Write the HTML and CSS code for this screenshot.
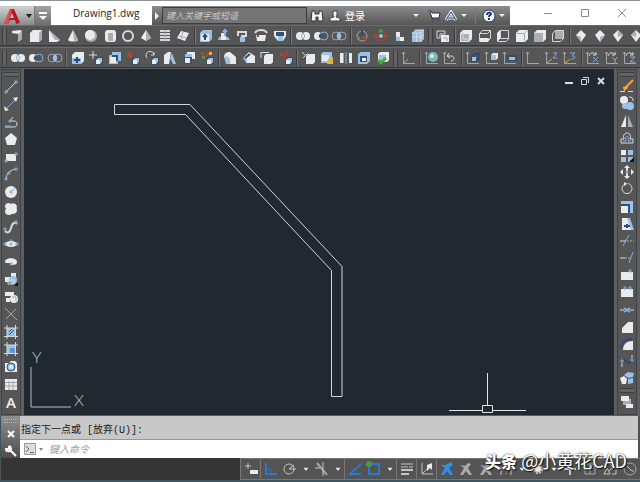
FILE: index.html
```html
<!DOCTYPE html>
<html lang="zh-CN">
<head>
  <meta charset="UTF-8" />
  <meta name="viewport" content="width=device-width, initial-scale=1.0" />
  <title>Drawing1.dwg</title>
  <link rel="stylesheet" href="styles.css">
</head>
<body>

  <header class="titlebar">
    <button class="app-btn" aria-label="Application menu">
      <svg width="18" height="18" viewBox="0 0 18 18"><path fill="#b3181d" d="M1 17L7 2h4l6 14-4 1-1-4H7l-2 4z"/><path fill="#e2504c" d="M1 17L7 2l2 1-4 14z"/><path fill="#c5c5c5" d="M9 6l2 5H7z"/></svg>
      <svg width="6" height="4" viewBox="0 0 6 4"><path fill="#222" d="M0 0h6L3 4z"/></svg>
    </button>
    <button class="quick-btn" aria-label="Quick access">
      <svg width="8" height="8" viewBox="0 0 8 8"><path fill="#fff" d="M0 0h8v2H0zM0 4h8L4 8z"/></svg>
    </button>
    <h1 class="doc-title">Drawing1.dwg</h1>
    <div class="infocenter">
      <button class="expand" aria-label="Expand">
        <svg width="5" height="8" viewBox="0 0 5 8"><path fill="#eee" d="M0 0l4 4-4 4z"/></svg>
      </button>
      <input class="search" type="text" placeholder="键入关键字或短语" aria-label="搜索">
      <button class="info-btn" aria-label="Search">
        <svg width="14" height="14" viewBox="0 0 14 14"><path fill="#f2f2f2" stroke="#333" d="M2 2h3v3h4V2h3l1 10H8V8H6v4H1z"/></svg>
      </button>
      <button class="info-btn login">
        <svg width="12" height="12" viewBox="0 0 12 12"><path fill="#f4f4f4" stroke="#444" d="M4 1h4v4L7 7l4 1v3H1V8l4-1-1-2z"/></svg>
        登录
      </button>
      <span class="caret push"></span>
      <button class="info-btn" aria-label="App store">
        <svg width="14" height="12" viewBox="0 0 14 12"><path fill="#fff" stroke="#1e2c50" d="M1 1h3l1 2h8l-1 5H5L3 2"/><circle cx="6" cy="10" r="1" fill="#fff" stroke="#1e2c50"/><circle cx="11" cy="10" r="1" fill="#fff" stroke="#1e2c50"/></svg>
      </button>
      <button class="info-btn" aria-label="A360">
        <svg width="14" height="12" viewBox="0 0 14 12"><path fill="none" stroke="#e7effa" stroke-width="3" d="M2 10l5-8 5 8M3 8h8"/><path fill="none" stroke="#29406b" d="M2 10l5-8 5 8M3 8h8"/></svg>
      </button>
      <span class="caret"></span>
      <span class="info-sep"></span>
      <button class="info-btn" aria-label="Help">
        <svg width="14" height="14" viewBox="0 0 14 14"><circle cx="7" cy="7" r="6" fill="#fff" stroke="#1f3a78"/><path fill="none" stroke="#1f3a78" stroke-width="2" d="M5 6c0-3 4-3 4-1 0 1-2 1-2 3M7 9v2"/></svg>
      </button>
      <span class="caret"></span>
    </div>
    <div class="window-btns">
      <button aria-label="Minimize"><svg width="10" height="10" viewBox="0 0 10 10"><path d="M1 5.5h8"/></svg></button>
      <button aria-label="Maximize"><svg width="10" height="10" viewBox="0 0 10 10"><path d="M1.500 1.500h7v7h-7z"/></svg></button>
      <button aria-label="Close"><svg width="10" height="10" viewBox="0 0 10 10"><path d="M1 1l8 8M9 1L1 9"/></svg></button>
    </div>
  </header>

  <!-- toolbars are filled from script.js -->
  <div class="toolbar row overflow" id="modeling"></div>
  <div class="toolbar row" id="editing"></div>

  <main class="workspace">
    <div class="toolbar column" id="draw"></div>
    <section class="canvas">
      <svg class="drawing" width="100%" height="100%">
        <path class="pline" d="M90.500 35.500H166L318 197.500V327.500H307.500V201.500L161.500 45.500H90.500z"/>
        <path class="cursor" d="M463.500 304V336M425 341.500H458M469 341.500H502M458.500 336.500h10v7h-10z"/>
      </svg>
      <svg class="ucs" width="64" height="76" viewBox="0 0 64 76">
        <path d="M7 28v40h40"/>
        <text x="8" y="24">Y</text>
        <text x="50" y="67">X</text>
      </svg>
      <div class="doc-btns">
        <button aria-label="Minimize drawing"><svg width="10" height="10" viewBox="0 0 10 10"><path d="M1 7h8"/></svg></button>
        <button aria-label="Restore drawing"><svg width="10" height="10" viewBox="0 0 10 10"><path class="thin" d="M1.500 3.500h5v5h-5zM3 1.500h5.500V7"/></svg></button>
        <button aria-label="Close drawing"><svg width="10" height="10" viewBox="0 0 10 10"><path d="M2 2l6 6M8 2L2 8"/></svg></button>
      </div>
    </section>
    <div class="toolbar column" id="modify"></div>
  </main>

  <section class="command">
    <div class="command-side">
      <span class="dots"></span>
      <button aria-label="Close command line"><svg width="10" height="10" viewBox="0 0 10 10"><path stroke="#fff" stroke-width="2" d="M2 2l6 6M8 2L2 8"/></svg></button>
      <button aria-label="Customize"><svg width="12" height="12" viewBox="0 0 12 12"><path fill="none" stroke="#fff" stroke-width="2" d="M5 5l6 6M4 1v3H1c0 3 5 3 5 0 0-1-1-3-2-3"/></svg></button>
    </div>
    <div class="history">指定下一点或 [放弃(U)]:</div>
    <div class="prompt">
      <svg width="20" height="12" viewBox="0 0 20 12"><path fill="#ddd" stroke="#999" d="M.5.5h11v11H.5z"/><path fill="none" stroke="#666" d="M2 3l3 3-3 3M6 9.500h4"/><path fill="#888" d="M15 5h4l-2 3z"/></svg>
      <input type="text" placeholder="键入命令" aria-label="命令">
    </div>
  </section>

  <footer class="statusbar" id="status"></footer>

  <div class="watermark"><b>头条</b> @小黄花CAD</div>

  <script src="script.js"></script>
</body>
</html>
```

FILE: styles.css
```css
* {
  box-sizing: border-box;
}

body {
  margin: 0;
  min-height: 100vh;
  display: flex;
  flex-direction: column;
  position: relative;
  overflow: hidden;
  font-family: "Open Sans", "Noto Sans CJK SC", sans-serif;
  font-size: 10px;
  background: #4b5357;
  border-bottom: 2px solid #40545e;
}

button {
  display: flex;
  align-items: center;
  justify-content: center;
  margin: 0;
  padding: 0;
  border: 0;
  background: none;
  font: inherit;
  color: inherit;
}

svg {
  display: block;
  flex: none;
}

input {
  font: inherit;
  min-width: 0;
}

/* Title bar */
.titlebar {
  display: flex;
  align-items: flex-end;
  height: 25px;
  background: #fff;
  border-top: 1px solid #8a9499;
}

.app-btn {
  width: 34px;
  height: 19px;
  gap: 5px;
  padding-left: 1px;
  background: linear-gradient(#d2d2d2, #8b8b8b);
}

.quick-btn {
  width: 17px;
  height: 19px;
  background: linear-gradient(#a2a2a2, #6e6e6e);
  border-left: 1px solid #777;
}

.doc-title {
  width: 101px;
  margin: 0;
  padding-left: 22px;
  font-size: 10px;
  font-weight: 400;
  line-height: 24px;
  color: #222;
}

.infocenter {
  flex: 1;
  display: flex;
  align-items: center;
  height: 19px;
  color: #fff;
  background: linear-gradient(#8c8c8c, #555);
}

.expand {
  width: 10px;
  height: 19px;
}

.search {
  width: 145px;
  height: 17px;
  padding: 0 3px;
  border: 1px solid #3e3e3e;
  background: #747474;
  font-size: 9px;
}

.search::placeholder {
  color: #c9c9c9;
  font-style: italic;
}

.info-btn {
  height: 19px;
  margin-left: 3px;
}

.login {
  gap: 4px;
  margin-left: 5px;
}

.caret {
  width: 0;
  margin: 0 5px 0 3px;
  border: 3px solid transparent;
  border-top-color: #eee;
  border-bottom: 0;
}

.push {
  margin-left: auto;
}

.info-sep {
  width: 1px;
  height: 16px;
  margin: 0 3px;
  background: #7a7a7a;
}

.window-btns {
  display: flex;
  align-self: stretch;
  width: 130px;
  padding-left: 20px;
}

.window-btns button {
  width: 37px;
}

.window-btns path {
  fill: none;
  stroke: #888;
}

/* Toolbars */
.toolbar {
  display: flex;
  align-items: center;
  justify-content: space-between;
  background: #565656;
}

.row {
  height: 21px;
  padding: 0 2px;
  border-top: 1px solid #6b6b6b;
  border-bottom: 1px solid #373737;
}

.row + .row {
  margin-top: 1px;
}

.overflow {
  margin-right: -5px;
  padding-right: 0;
}

.column {
  flex-direction: column;
  width: 20px;
  padding: 2px 0 4px;
  border: 1px solid #3c4245;
}

.sep {
  width: 2px;
  height: 16px;
  border-left: 1px solid #3a3a3a;
  border-right: 1px solid #777;
}

.grip {
  width: 5px;
  height: 16px;
  border: 1px solid #3d3d3d;
  border-width: 0 1px;
  background: #626262;
}

.column .grip {
  width: 14px;
  height: 5px;
  border-width: 1px 0;
}

.text-tool {
  height: 16px;
  font-size: 15px;
  font-weight: 600;
  line-height: 16px;
  color: #eee;
}

.w {
  fill: #e9ebed;
}

.g {
  fill: #a8aeb4;
}

.b {
  fill: #9ac1e6;
}

.d {
  fill: #36506c;
}

.r {
  fill: #b9412f;
}

.y {
  fill: #e8b03c;
}

.n {
  fill: #4e9a45;
}

.lw,
.lg,
.lb,
.ld,
.lr,
.ly {
  fill: none;
  stroke: #d6d9dc;
}

.lg {
  stroke: #a0a6aa;
}

.lb {
  stroke: #83aee0;
}

.ld {
  stroke: #2a4a7c;
}

.lr {
  stroke: #b9412f;
}

.ly {
  stroke: #e8a838;
}

.thick {
  stroke-width: 2;
}

/* Drawing area */
.workspace {
  flex: 1;
  display: flex;
  gap: 3px;
  padding: 1px 3px 1px 1px;
  background: #5b5f61;
}

.canvas {
  position: relative;
  flex: 1;
  overflow: hidden;
  background: #212830;
}

.drawing {
  position: absolute;
  top: 0;
  left: 0;
}

.pline {
  fill: none;
  stroke: #d3d6d8;
}

.cursor {
  fill: none;
  stroke: #e2e4e6;
}

.ucs {
  position: absolute;
  left: 0;
  bottom: 0;
}

.ucs path {
  fill: none;
  stroke: #b9bdc0;
}

.ucs text {
  fill: #c5c9cc;
  font: 300 16px Lato, sans-serif;
}

.doc-btns {
  position: absolute;
  top: 7px;
  right: 8px;
  display: flex;
  gap: 6px;
}

.doc-btns path {
  fill: none;
  stroke: #d9dcde;
  stroke-width: 2;
}

.doc-btns .thin {
  stroke-width: 1;
}

/* Command line */
.command {
  display: grid;
  grid-template-columns: 19px 1fr;
  grid-template-rows: 24px 18px;
  margin-right: 2px;
  border-left: 1px solid #40545e;
}

.command-side {
  grid-row: 1 / 3;
  display: flex;
  flex-direction: column;
  align-items: center;
  justify-content: space-between;
  padding: 3px 0 1px;
  background: linear-gradient(#8e8e8e, #4c4c4c);
}

.dots {
  width: 14px;
  height: 4px;
  border: 1px dotted #b5b5b5;
  border-width: 1px 0;
}

.history {
  padding: 5px 1px 0;
  font-family: "Liberation Mono", "Noto Sans CJK SC", monospace;
  line-height: 20px;
  color: #1c1c1c;
  background: #c8c8c8;
  border-bottom: 1px solid #999;
}

.prompt {
  display: flex;
  align-items: center;
  gap: 5px;
  padding-left: 4px;
  background: #fff;
}

.prompt input {
  flex: 1;
  height: 16px;
  padding: 0;
  border: 0;
}

.prompt input::placeholder {
  color: #999;
  font-style: italic;
}

/* Status bar */
.statusbar {
  display: flex;
  justify-content: flex-end;
  height: 22px;
  margin-left: 1px;
  background: #353535;
}

.statusbar button {
  width: 20px;
  background: #545454;
  border-top: 1px solid #777;
  border-bottom: 1px solid #777;
}

.statusbar .drop {
  width: 12px;
}

.statusbar .edge {
  border-left: 1px solid #777;
}

.statusbar .lb {
  stroke: #2f78cc;
}

.statusbar .b {
  fill: #2f8ff0;
}

.statusbar .lw {
  stroke: #c4c4c4;
}

.watermark {
  position: absolute;
  right: 13px;
  bottom: 7px;
  font-size: 18px;
  line-height: 24px;
  font-family: "Noto Sans CJK SC", sans-serif;
  color: #fff;
  text-shadow: 1px 1px 1px #111, 0 0 2px #222;
  white-space: nowrap;
}

.watermark b {
  font-size: 16px;
  font-weight: 900;
}
```

FILE: script.js
```js
// pieces shared by several icons
const axes = '<path class="lg" d="M2.500 2v11.500H14M1 4l1.500-2L4 4"/>';
const cube = '<path class="w" d="M2 5l3-3h9v9l-3 3H2z"/>';
const smallCube = '<path class="d" d="M7 7h8v8H7z"/><path class="w" d="M8 10h4v4H8z"/><path class="b" d="M8 10l2-2h4v4l-2 2v-4z"/>';
const diamond = '<path class="w" d="M8 2l5 5-5 7-5-7z"/>';

// 16x16 icons
const icons = {
  polysolid: '<path class="w" d="M3 3l8-1 2 1v8l-4 3V6L3 5z"/><path class="g" d="M9 6l4-3v8l-4 3z"/>',
  box: cube + '<path class="g" d="M11 5l3-3v9l-3 3z"/>',
  wedge: '<path class="w" d="M3 2l11 10-3 2H3z"/><path class="g" d="M3 2l11 10H9z"/>',
  cone: '<path class="w" d="M8 2l5 10c-1 2-9 2-10 0z"/><path class="g" d="M8 2l5 10-4 1z"/>',
  sphere: '<circle class="g" cx="8" cy="8" r="6"/><circle class="w" cx="7" cy="7" r="5"/>',
  cylinder: '<rect class="w" x="3" y="2" width="11" height="12" rx="3"/><path class="g" d="M6 5h5v8H6z"/>',
  torus: '<circle class="lw thick" cx="8" cy="8" r="5"/>',
  pyramid: '<path class="w" d="M8 2l5 8-5 3-5-3z"/><path class="g" d="M8 2l5 8-5 3z"/>',
  helix: '<path class="lw thick" d="M3 3h10M3 6h10M3 9h10M3 12h10"/><path class="lg" d="M8 2v12"/>',
  planar: '<path class="w" d="M6 3l8 2-4 8-8-3z"/><path class="lg" d="M4 8l7 2M8 4L6 11"/>',
  extrude: '<path class="b" d="M2 5l3-3h9v9l-3 3H2z"/><path class="w" d="M3 6h8v7H3z"/><path class="ld thick" d="M7 12V7M5 9l2-2 2 2"/>',
  presspull: '<path class="b" d="M3 9h9l2 3H2z"/><path class="w" d="M5 5h5v7H5z"/><path class="lb thick" d="M9 8V2M7 4l2-2 2 2"/>',
  sweep: '<path class="lw thick" d="M3 8V4h8v4H7v4"/><path class="b" d="M5 9h5v5H5z"/>',
  revolve: '<path class="lw thick" d="M2 5c2-4 10-4 12 0"/><path class="w" d="M3 7h10l-1 6H4z"/><path class="r" d="M4 7h2v2H4z"/>',
  loft: '<path class="w" d="M2 3h12v5l-3 5H6L2 8z"/><path class="d" d="M4 4h8v4H4z"/><path class="b" d="M6 8h5v5H6z"/>',
  union: '<circle class="w" cx="5" cy="8" r="4"/><circle class="w" cx="11" cy="8" r="4"/><path class="lb" d="M8 5c-2 2-2 4 0 6 2-2 2-4 0-6z"/>',
  subtract: '<circle class="lb" cx="11" cy="8" r="4"/><circle class="w" cx="5" cy="8" r="4"/><path class="d" d="M8 5c-3 2-3 4 0 6 2-2 2-4 0-6z"/>',
  intersect: '<circle class="lg" cx="5" cy="8" r="4"/><circle class="lg" cx="11" cy="8" r="4"/><path class="b" d="M8 4c-3 3-3 5 0 8 3-3 3-5 0-8z"/>',
  gizmo: '<circle class="lg" cx="8" cy="8" r="5"/><path class="lr thick" d="M8 8l5 4"/><path class="ld thick" d="M8 8V2"/><path class="n" d="M3 9h3v3H3z"/>',
  gizmo2: '<circle class="lr" cx="8" cy="8" r="5"/><path class="lr thick" d="M1 8h4M11 8h4"/><circle class="n" cx="8" cy="3" r="2"/><circle class="b" cx="8" cy="8" r="2"/>',
  stepBlock: '<path class="w" d="M5 4h4v5h4v4H5z"/><path class="b" d="M5 9h4v4H5z"/>',
  grid3d: '<path class="b" d="M2 5l3-3h9v9l-3 3H2z"/><path class="lw" d="M2 9h9l3-3M6.500 5v9M2 5h9l3-3M11 5v9M5 2h9"/>',
  views: '<path class="lw" d="M2 3h8v3H5v4H2z"/><path class="w" d="M6 7h8v7H6z"/><path class="lg" d="M8 10h4v3"/>',
  viewTop: cube + '<path class="g" d="M3 6h8v7H3z"/><path class="lw" d="M5 2v9h9"/>',
  viewBottom: '<path class="lw" d="M2.500 5.500l3-3h8v8l-3 3h-8zM2 5.500h8.500l3-3"/><path class="w" d="M3 10h8l2 1-2 3H3z"/>',
  viewLeft: '<path class="lw" d="M5.500 2.500h8v8h-8zM3 13.500h8l3-3"/><path class="w" d="M2 5l3-3v9l-3 3z"/>',
  viewRight: cube + '<path class="lg" d="M3 5.500h7.500V13M10.500 5.500l3-3"/>',
  viewFront: '<path class="w" d="M2 5l3-3h9v9l-3 3z"/><path class="g" d="M2 5h9v9H2z"/>',
  viewBack: '<path class="g" d="M5 2h9v9H5z"/><path class="lw" d="M2.500 5.500l3-3h8v8l-3 3h-8zV13"/>',
  iso1: diamond + '<path class="g" d="M3 7l5 2v5z"/>',
  iso2: diamond + '<path class="g" d="M8 9l5-2-5 7z"/>',
  iso3: diamond + '<path class="g" d="M8 2l5 5-5 2z"/>',
  iso4: diamond + '<path class="g" d="M8 2v7L3 7z"/>',

  extrudeFace: '<path class="w" d="M2 5l3-3h9v9l-3 3H2z"/><path class="b" d="M2 8h9v6H2z"/><path class="ld thick" d="M4 10h6M7 7v6"/>',
  moveFace: '<path class="lw" d="M5 1v8M1 5h8"/>' + smallCube,
  offsetFace: '<path class="b" d="M5 2h9v9h-3v3H2V5h3z"/><path class="d" d="M5 5h6v6H5z"/><path class="w" d="M3 7h6v6H3z"/>',
  deleteFace: '<path class="r" d="M2 2l3 1 3-1-1 3 1 3-3-1-3 1 1-3z"/>' + smallCube,
  rotateFace: '<path class="lw" d="M3 8a4 4 0 1 1 7-3M10 2v3H7"/>' + smallCube,
  taperFace: '<path class="w" d="M2 5l4-3h3l-2 12H2z"/><path class="b" d="M10 3l4 11h-3L8 8z"/>',
  copyFace: '<path class="w" d="M6 2h8v7H6z"/><path class="b" d="M4 4h7v6H4z"/><path class="d" d="M3 7h8v7H3z"/><path class="w" d="M4 8h5v5H4z"/>',
  colorFace: '<path class="r" d="M2 2h3v3H2z"/><path class="n" d="M3 6h3v3H3z"/><path class="lr thick" d="M6 7l5-5"/><path class="y" d="M10 2h3v3h-3z"/>' + smallCube,
  filletEdge: '<path class="w" d="M2 7c0-4 3-5 6-5l6 5v7H6z"/><path class="b" d="M2 7c4-2 7 2 6 7H4z"/>',
  chamferEdge: '<path class="w" d="M2 8l6-6 6 4v7H6z"/><path class="ld thick" d="M3 9l6-5"/><path class="b" d="M2 8l4 1v5z"/>',
  copyEdge: '<path class="lw" d="M2 2v6M2 2.500h8"/><path class="w" d="M5 6l2-2h7v8l-2 2H5z"/>',
  colorEdge: '<path class="r" d="M2 3h3v3H2zM6 6h2v3H6z"/><path class="lr thick" d="M6 6l4-4"/>' + smallCube,
  imprint: '<path class="lw" d="M1 2l6 6M2 8l5-5"/><path class="w" d="M5 6l2-2h7v8l-2 2H5z"/>',
  clean: '<path class="b" d="M2 4l2-2h9v9l-2 2H2z"/><path class="w" d="M3 5h7v6H3z"/><path class="y" d="M9 9h3V7h2v7H8z"/>',
  separate: '<path class="w" d="M2 3h3v10H2zM11 3h3v10h-3z"/><path class="lb" d="M8 2v12M5.500 3v10"/>',
  shell: '<path class="b" d="M2 4l3-2h9v9l-3 3H2z"/><path class="d" d="M4 6h7v6H4z"/><path class="w" d="M6 8h4v3H6z"/>',
  check: '<path class="w" d="M3 4l2-2h9v8l-2 2H3z"/><path class="b" d="M4 5h7v6H4z"/><path fill="none" stroke="#4aa83c" stroke-width="3" d="M3 10l3 3 5-5"/>',
  ucs: axes + '<path class="lg" d="M3 13l4-4"/>',
  world: axes + '<circle cx="9" cy="7" r="5" fill="#79b9bd"/><circle cx="8" cy="6" r="2" fill="#d8efe8"/>',
  ucsPrev: axes + '<path class="lw" d="M5 6h4c4 0 4 5 0 5M7 3L5 6l3 2"/>',
  ucsFace: axes + '<path class="ld thick" d="M7 7l3-3h4v4l-3 3H7z"/><path class="b" d="M7 7h4v4H7z"/>',
  ucsObject: axes + '<path class="w" d="M7 5l2-2h5v5l-2 2H7z"/><path class="b" d="M7 5h5v5H7z"/>',
  ucsView: axes + '<path class="d" d="M5 5h10v6H5z"/><path class="b" d="M7 7h6v3H7z"/>',
  origin: axes,
  zAxis: axes + '<path class="lb" d="M9 3h4l-4 5h4"/><path class="ly" d="M3 13l5-4"/>',
  threePoint: axes + '<path class="lb" d="M8 3h5L10 6c5 0 3 4-1 3"/><path class="ly" d="M3 13l5-4"/>',
  rotX: axes + '<path class="lw" d="M4 6c1-4 5-4 7-1M11 2v3H8"/><path class="lb" d="M8 7l5 5M13 7l-5 5"/>',
  rotY: axes + '<path class="lw" d="M4 6c1-4 5-4 7-1M11 2v3H8"/><path class="lb" d="M8 7l3 3 2-3M11 10v3"/>',
  rotZ: axes + '<path class="lw" d="M4 6c1-4 5-4 7-1M11 2v3H8"/><path class="lb" d="M8 7h5l-5 5h5"/>',

  line: '<path class="lw" d="M3 13L13 3"/><path class="lb" d="M2 12h2v2H2zM12 2h2v2h-2z"/>',
  xline: '<path class="lb" d="M4 12l8-8"/><path class="w" d="M1 10l5 4-4 1zM10 2l5-1-2 5z"/>',
  polyline: '<path class="lw" d="M2 13h9c4 0 4-6 0-6H7l3-4"/><path class="lb" d="M2 12h6M6 6h2v2H6z"/>',
  polygon: '<path class="w" d="M8 2l6 5-2 7H4L2 7z"/>',
  rectangle: '<path class="w" d="M3 5h10v7H3z"/><path class="lb" d="M2 11h2v2H2zM12 4h2v2h-2z"/>',
  arc: '<path class="lw" d="M3 13C3 8 7 4 13 3"/><path class="lb" d="M2 12h2v2H2zM5 6h2v2H5zM12 2h2v2h-2z"/>',
  circle: '<circle class="w" cx="8" cy="8" r="6"/><path class="lb" d="M7 7h2v2H7zM9 7l3-3"/>',
  cloud: '<path class="w" d="M3 3q3-2 5 0 4-2 6 2-1 2 0 4 0 4-5 4-3 2-6 0-2-3 0-5-2-3 0-5z"/>',
  spline: '<path class="lw thick" d="M2 12c3 3 5 1 6-3s3-7 6-4"/><path class="lb" d="M1 9h2v2H1zM12 2h2v2h-2z"/>',
  ellipse: '<ellipse class="w" cx="8" cy="8" rx="6" ry="3"/><path class="lb" d="M7 7h2v2H7zM1 7h2v2H1zM13 7h2v2h-2zM7 4h2v1"/>',
  ellipseArc: '<path class="w" d="M2 8c0-5 12-5 12 0 0 3-4 3-6 3V9H3z"/><path class="lb" d="M7 9h2v2H7z"/>',
  insert: '<path class="w" d="M2 6h5v5H2zM8 2h5v5H8z"/><circle class="b" cx="10" cy="9" r="4"/><path class="lw" d="M5 9h6v4H5z"/><path fill="#111" d="M15 11v4h-4z"/>',
  block: '<path class="w" d="M2 3h9v4H2zM3 9h4v4H3z"/><circle class="w" cx="11" cy="10" r="4"/><path class="lb" d="M9 8h4v4"/>',
  point: '<path class="lg" d="M2 2l12 12M13 3L3 13"/>',
  hatch: '<path class="b" d="M4 4h9v9H4z"/><path class="lw" d="M4 1v14M12.500 1v14M1 4h14M1 12.500h14"/><path class="ld" d="M6 8l3-3M6 11l5-5"/>',
  gradient: '<path class="b" d="M4 4h9v9H4z"/><path class="lw" d="M4 1v14M12.500 1v14M1 4h14M1 12.500h14"/><path fill="#5f93da" d="M7 7h5v5H7z"/>',
  region: '<path class="w" d="M2 4h4l2-2h4l2 2v9H2z"/><circle class="b" cx="8" cy="8" r="4"/><circle class="w" cx="8" cy="8" r="2"/><circle class="ld" cx="8" cy="8" r="4"/>',
  table: '<path class="w" d="M2 3h12v11H2z"/><path class="lg" d="M2 6.500h12M2 10h12M6 5v9M10 5v9"/>',

  erase: '<path class="ly thick" d="M7 9l7-7"/><path class="lr" d="M8 10l7-7"/><path class="y" d="M4 9l4-1 1 2-4 3z"/><path class="lw" d="M1 13.500h5M9 13.500h5"/>',
  copy: '<circle class="w" cx="5" cy="5" r="4"/><circle class="b" cx="11" cy="11" r="4"/><circle class="b" cx="6" cy="11" r="3"/><path class="lw" d="M10 2c3 0 4 1 4 4"/>',
  mirror: '<path class="w" d="M7 2v12H2z"/><path class="g" d="M9 2v12h5z"/>',
  offset: '<path class="lw" d="M2 13h12V9h-3c3-8-9-8-6 0H2z"/><path class="lb" d="M4 11h3C5 5 11 5 9 11h3"/>',
  array: '<path class="w" d="M2 3h5v5H2z"/><path class="b" d="M9 3h5v5H9zM2 10h5v5H2zM9 10h5v5H9z"/><path fill="#111" d="M15 10v5h-5z"/>',
  move: '<path class="w" d="M8 1l3 3H9v3H7V4H5zM8 15l3-3H9V9H7v3H5zM1 8l3-3v6zM15 8l-3-3v6z"/><path class="lb" d="M7 7h2v2H7z"/>',
  rotate: '<path class="lw" d="M10 3a5 5 0 1 1-4 0"/><path class="lb" d="M6 3c2-1 3-1 5 0"/><path class="w" d="M5 1l3 2-3 2z"/>',
  scale: '<path class="b" d="M2 2h12v12H2z"/><path class="d" d="M2 5h9v9H2z"/><path class="w" d="M2 7h7v7H2z"/>',
  stretch: '<path class="w" d="M3 2h7l4 12H3z"/><path class="b" d="M8 2h3l4 12h-3z"/><path class="ld thick" d="M5 10h6M8 8v4"/>',
  trim: '<path class="lb" d="M4 13l6-11"/><path class="lw" d="M1 8h6"/><path class="lg" stroke-dasharray="2 1" d="M8 8h7"/>',
  extend: '<path class="lb" d="M10 13l4-11"/><path class="lw" d="M1 8h5"/><path class="lg" stroke-dasharray="2 1" d="M6 8h6"/>',
  breakAt: '<path class="w" d="M2 5h12v8H2z"/><path class="lb" d="M10 3h2v2h-2z"/>',
  breakTwo: '<path class="w" d="M2 5h12v8H2z"/><path class="lb" d="M5 3h2v2H5zM10 3h2v2h-2z"/>',
  join: '<path class="lw" d="M1 8h4M11 8h4"/><path class="lb thick" d="M5 6l3 2-3 2M11 6L8 8l3 2"/>',
  chamfer: '<path class="w" d="M3 9l6-6h5v11H3z"/><path class="ld" d="M2 8l6-6"/>',
  fillet: '<path class="w" d="M4 14C4 8 8 5 14 5v9z"/><path class="ld thick" d="M2 12c0-6 4-9 11-9"/>',
  blend: '<path class="ld thick" d="M3 7c4-2 5 5 8 3s1-4 3-5"/><path class="lw" d="M3 14v-4M13 2v3"/><path class="lb" d="M2 7h2v2H2zM12 6h2v2h-2z"/>',
  explode: '<path class="w" d="M1 8l4-2 3 3-1 5H3z"/><path class="b" d="M5 5l4-3 6 1-1 4-5 1zM9 9l5-1v5l-5 1z"/>',
  order: '<path class="g" d="M4 5h8v6H4z"/><path class="w" d="M2 2h8v5H2zM7 10h7v4H7z"/>',

  infer: '<path class="lw" d="M2 5h6M5 2v6"/><path class="w" d="M7 9h8v4H7z"/>',
  ortho: '<path class="lb thick" d="M3 2v11h11"/><path class="lb" d="M3 8h5v5"/>',
  polar: '<circle class="lw" cx="7" cy="8" r="5"/><path class="lw" d="M7 8h7M7 8l5-4"/>',
  iso: '<path class="lg thick" d="M3 2l10 12"/><path class="lw" d="M9 1v14M1 7h5"/>',
  track: '<path class="lb thick" d="M14 3L3 13h11"/>',
  osnap: '<path class="lb thick" d="M3 3h10v10H3z"/><circle class="n" cx="3" cy="3" r="3"/>',
  weight: '<path class="lw" d="M2 3h12M2 6h7M10 6h4"/><path class="lw thick" d="M2 9h12M2 13h8"/>',
  dynUcs: '<path class="lw" d="M3 2v11h11M3 13l5-5"/><path class="w" d="M8 4l5-2v7l-2-2-3 3z"/>',
  person: '<path class="b" d="M2 4h5l5-3 2 3-4 3 4 7h-3l-3-4-3 4H2l4-7z"/>',
  personGray: '<path class="g" d="M2 4l5 1 3-3 3 1-3 4 4 7h-3l-3-4-3 4H2l4-7z"/>',
  scaleText: '<path class="lw" d="M3 6v8M13 6v8M8 8v1M8 12v1"/>',
  gear: '<circle class="lw thick" cx="8" cy="8" r="4" stroke-dasharray="2 1"/><circle class="w" cx="8" cy="8" r="3"/>',
  plus: '<path class="lw thick" d="M8 2v12M2 8h12"/>',
  units: '<path class="lg" d="M3 3h10v10H3zM8 3v10M3 8h5"/>',
  isolate: '<path class="lw" d="M7 2l4 4-4 4M2 13l3-6 3 6zM10 13h4V9"/>',
  perf: '<circle class="lg" cx="8" cy="8" r="6"/><path class="lw" d="M5 5l5 5h2"/>',
  drop: '<path class="w" d="M4 6h8l-4 5z"/>'
};

// "|" is a separator, "#" is a grip
const bars = {
  modeling: "# polysolid box wedge cone sphere cylinder torus pyramid helix planar | extrude presspull sweep revolve loft | union subtract intersect | gizmo gizmo2 stepBlock grid3d # views | viewTop viewBottom viewLeft viewRight viewFront viewBack | iso1 iso2 iso3 iso4",
  editing: "# union subtract intersect | extrudeFace moveFace offsetFace deleteFace rotateFace taperFace copyFace colorFace | filletEdge chamferEdge copyEdge colorEdge | imprint clean separate shell check # ucs | world ucsPrev | ucsFace ucsObject ucsView | origin zAxis threePoint | rotX rotY rotZ",
  draw: "# line xline polyline polygon rectangle arc circle cloud spline ellipse ellipseArc insert block point hatch gradient region table text",
  modify: "# erase copy mirror offset array move rotate scale stretch trim extend breakAt breakTwo join chamfer fillet blend explode # order",
  status: "infer ortho polar drop iso drop track osnap drop weight dynUcs person personGray personGray scaleText drop gear drop plus units isolate perf"
};

const edges = ["infer", "ortho", "track", "weight", "dynUcs", "person"];

Object.keys(bars).forEach((id) => {
  const bar = document.getElementById(id);
  bars[id].split(" ").forEach((name) => {
    if (name === "|" || name === "#") {
      const mark = document.createElement("span");
      mark.className = name === "|" ? "sep" : "grip";
      bar.appendChild(mark);
      return;
    }
    const btn = document.createElement("button");
    btn.setAttribute("aria-label", name);
    if (name === "text") {
      btn.className = "text-tool";
      btn.textContent = "A";
    } else {
      const size = name === "drop" ? 10 : 16;
      btn.innerHTML = `<svg width="${size}" height="${size}" viewBox="0 0 16 16">${icons[name]}</svg>`;
    }
    if (name === "drop") btn.className = "drop";
    if (id === "status" && edges.includes(name)) btn.classList.add("edge");
    bar.appendChild(btn);
  });
});
```
